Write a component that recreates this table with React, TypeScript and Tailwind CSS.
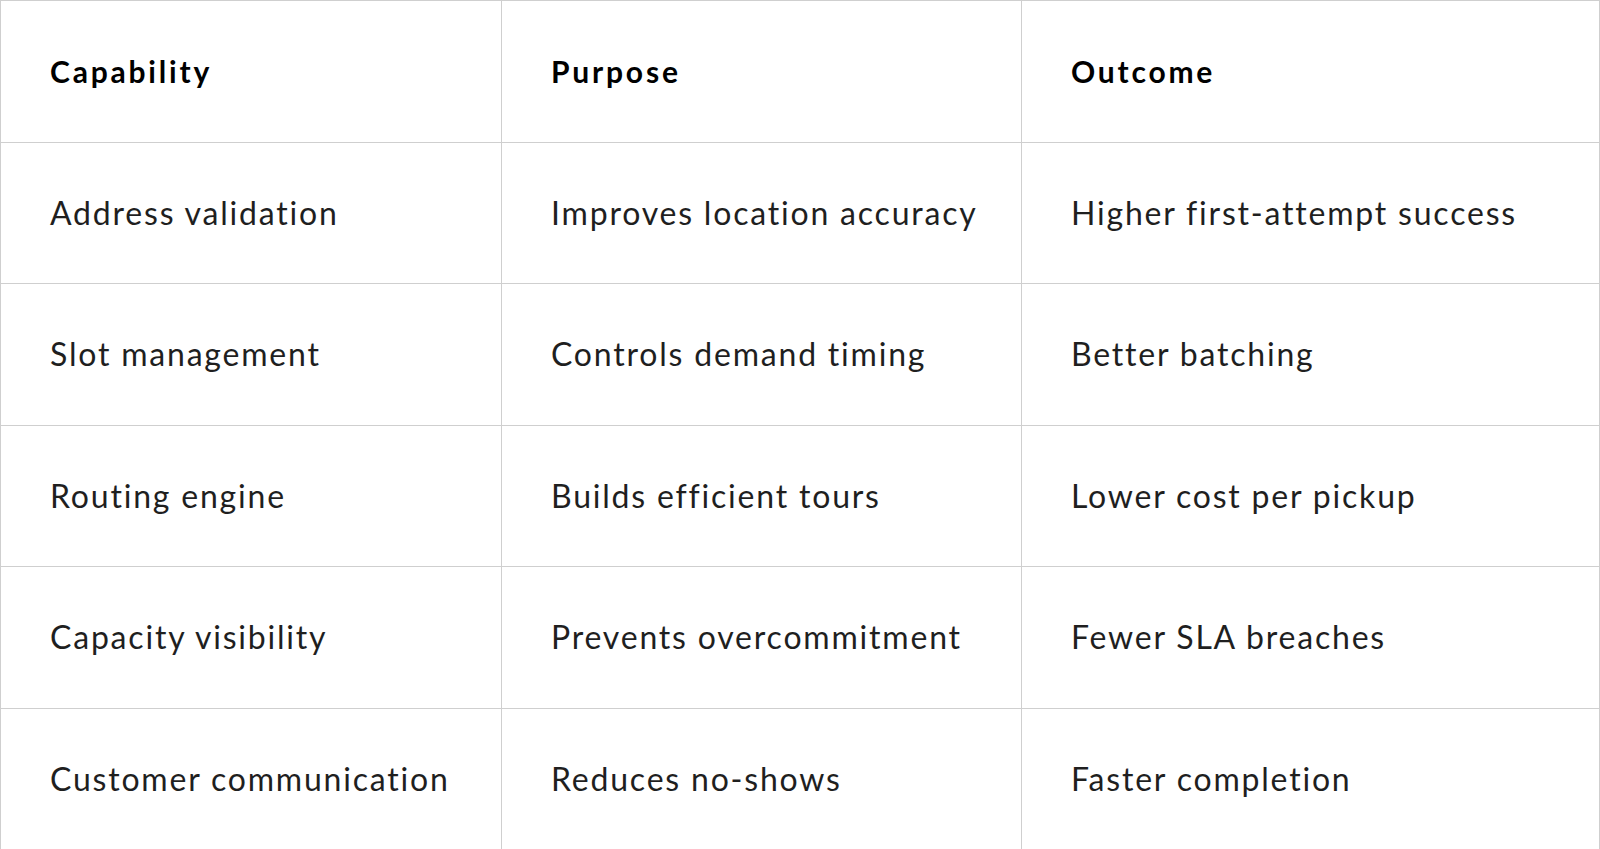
const rows: [string, string, string][] = [
  ["Address validation", "Improves location accuracy", "Higher first-attempt success"],
  ["Slot management", "Controls demand timing", "Better batching"],
  ["Routing engine", "Builds efficient tours", "Lower cost per pickup"],
  ["Capacity visibility", "Prevents overcommitment", "Fewer SLA breaches"],
  ["Customer communication", "Reduces no-shows", "Faster completion"],
];

const headers = ["Capability", "Purpose", "Outcome"];

export default function App() {
  return (
    <div className="w-[1600px] h-[849px] bg-white font-['Lato',sans-serif]">
      <table className="w-full h-full border-collapse table-fixed border border-[#b5b5b5]">
        <colgroup>
          <col className="w-[501px]" />
          <col className="w-[520px]" />
          <col />
        </colgroup>
        <thead>
          <tr className="h-[141.5px]">
            {headers.map((h) => (
              <th
                key={h}
                className="border border-[#cfcfcf] pl-[49px] text-left text-[30px] font-bold text-black tracking-[2.8px]"
              >
                {h}
              </th>
            ))}
          </tr>
        </thead>
        <tbody>
          {rows.map((r) => (
            <tr key={r[0]} className="h-[141.5px]">
              {r.map((c, i) => (
                <td
                  key={i}
                  className="border border-[#cfcfcf] pl-[49px] text-[32px] text-[#1f1f1f] tracking-[1.8px]"
                >
                  {c}
                </td>
              ))}
            </tr>
          ))}
        </tbody>
      </table>
    </div>
  );
}
